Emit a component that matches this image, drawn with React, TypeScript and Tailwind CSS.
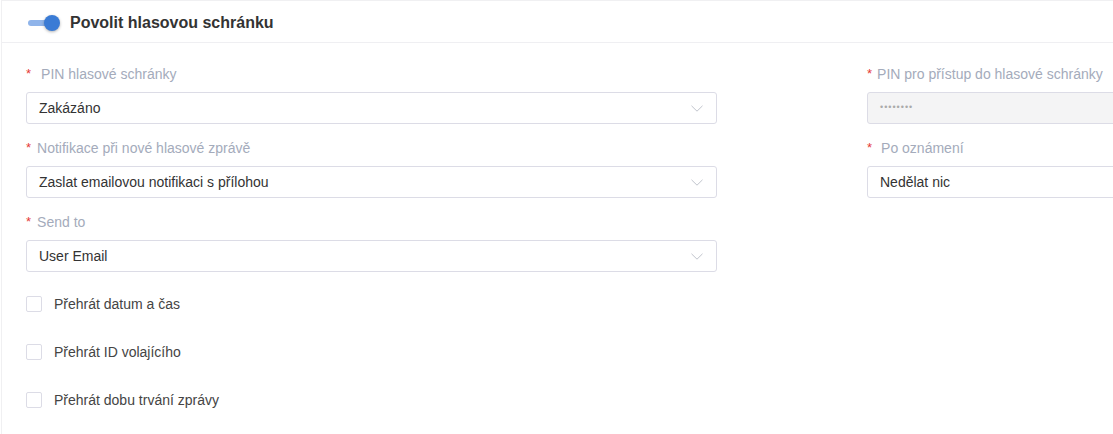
function Label({ text, gap }: { text: string; gap: string }) {
    return (
        <div className="h-5 flex items-center text-[14px] text-[#a4abbb]">
            <span className="text-[#e53935] text-[13px]">*</span>
            <span className={gap}>{text}</span>
        </div>
    )
}

function Chevron() {
    return (
        <svg width="12" height="7" viewBox="0 0 12 7" fill="none" className="mr-[1px]">
            <path d="M0.5 0.8 L6 6.2 L11.5 0.8" stroke="#c0c4cc" strokeWidth="1" />
        </svg>
    )
}

function Select({ value }: { value: string }) {
    return (
        <div className="mt-2 h-8 border border-[#dcdce6] rounded-[3px] flex items-center justify-between pl-3 pr-3 text-[14px] text-[#333]">
            <span>{value}</span>
            <Chevron />
        </div>
    )
}

function Check({ text }: { text: string }) {
    return (
        <div className="h-12 flex items-center">
            <div className="w-4 h-4 border border-[#dcdce6] rounded-[2px] bg-white" />
            <span className="ml-3 text-[14px] text-[#444]">{text}</span>
        </div>
    )
}

export default function App() {
    return (
        <div className="w-[1113px] h-[434px] overflow-hidden bg-white" style={{ fontFamily: '"Liberation Sans", Arial, sans-serif' }}>
            <div className="ml-px w-[1200px] h-full border-l border-t border-[#f0f0f2]">
                {/* header */}
                <div className="h-[42px] border-b border-[#efeff2] flex items-center pl-[26px] pt-[2px]">
                    <div className="relative w-[34px] h-4 flex items-center">
                        <div className="w-[26px] h-[6px] rounded-full bg-[#8fb4ea]" />
                        <div className="absolute left-[16px] top-0 w-4 h-4 rounded-full bg-[#3a7bd5] shadow-[0_1px_3px_rgba(0,0,0,0.3)]" />
                    </div>
                    <span className="ml-[8px] text-[16px] font-bold text-[#333]">Povolit hlasovou schránku</span>
                </div>

                <div className="pl-[24px] pt-[21px]">
                    <div className="grid grid-cols-[691px_691px] gap-x-[150px] gap-y-[14px]">
                        <div>
                            <Label text="PIN hlasové schránky" gap="ml-[10px]" />
                            <Select value="Zakázáno" />
                        </div>
                        <div>
                            <Label text="PIN pro přístup do hlasové schránky" gap="ml-[5px]" />
                            <div className="mt-2 h-8 border border-[#dcdce6] rounded-[3px] bg-[#f4f4f5] flex items-center pl-3 text-[9px] tracking-[1px] text-[#aaa]">
                                ••••••••
                            </div>
                        </div>
                        <div>
                            <Label text="Notifikace při nové hlasové zprávě" gap="ml-[6px]" />
                            <Select value="Zaslat emailovou notifikaci s přílohou" />
                        </div>
                        <div>
                            <Label text="Po oznámení" gap="ml-[9px]" />
                            <div className="mt-2 h-8 border border-[#dcdce6] rounded-[3px] flex items-center pl-3 text-[14px] text-[#333]">
                                Nedělat nic
                            </div>
                        </div>
                        <div>
                            <Label text="Send to" gap="ml-[6px]" />
                            <Select value="User Email" />
                        </div>
                    </div>
                    <div className="mt-2">
                        <Check text="Přehrát datum a čas" />
                        <Check text="Přehrát ID volajícího" />
                        <Check text="Přehrát dobu trvání zprávy" />
                    </div>
                </div>
            </div>
        </div>
    )
}
